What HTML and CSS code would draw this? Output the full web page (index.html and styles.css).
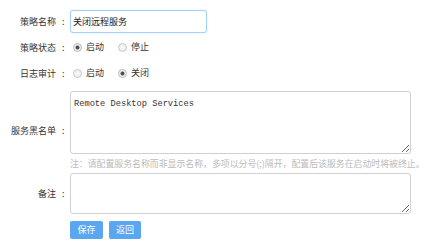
FILE: index.html
```html
<!DOCTYPE html>
<html>

<head>
  <meta charset="utf-8">
  <title>策略编辑</title>
  <link rel="stylesheet" href="styles.css">
</head>

<body>
  <form class="policy">
    <div class="row row-name">
      <label class="lbl">策略名称<span class="colon">:</span></label>
      <div class="field">
        <input type="text" class="txt focus" value="关闭远程服务" autofocus>
      </div>
    </div>
    <div class="row row-radio">
      <label class="lbl">策略状态<span class="colon">:</span></label>
      <div class="field">
        <label class="opt"><input type="radio" name="state" checked>启动</label>
        <label class="opt"><input type="radio" name="state">停止</label>
      </div>
    </div>
    <div class="row row-radio row-audit">
      <label class="lbl">日志审计<span class="colon">:</span></label>
      <div class="field">
        <label class="opt"><input type="radio" name="audit">启动</label>
        <label class="opt"><input type="radio" name="audit" checked>关闭</label>
      </div>
    </div>
    <div class="row row-black">
      <label class="lbl">服务黑名单<span class="colon">:</span></label>
      <div class="field">
        <textarea class="area area-black">Remote Desktop Services</textarea>
        <p class="note">注：请配置服务名称而非显示名称，多项以分号(;)隔开，配置后该服务在启动时将被终止。</p>
      </div>
    </div>
    <div class="row row-memo">
      <label class="lbl">备注<span class="colon">:</span></label>
      <div class="field">
        <textarea class="area area-memo"></textarea>
      </div>
    </div>
    <div class="row row-btns">
      <span class="lbl"></span>
      <div class="field">
        <button type="button" class="btn">保存</button>
        <button type="button" class="btn">返回</button>
      </div>
    </div>
  </form>
</body>

</html>
```

FILE: styles.css
```css
* {
  box-sizing: border-box;
}

body {
  margin: 0;
  background: #fff;
  color: #333;
  font-family: "Microsoft YaHei", "Noto Sans CJK SC", "Noto Sans", sans-serif;
  font-size: 9px;
}

.policy {
  padding-top: 10px;
}

.row {
  display: flex;
  align-items: center;
}

.lbl {
  width: 70px;
  flex: none;
  text-align: right;
  line-height: 12px;
  color: #333;
}

.colon {
  display: inline-block;
  width: 14px;
  padding-left: 6px;
  text-align: left;
}

.field {
  flex: 1;
}

.row-name {
  height: 23px;
}

.txt {
  width: 137px;
  height: 23px;
  padding: 0 2px;
  border: 1px solid #a6d0fb;
  border-radius: 3px;
  font: inherit;
  font-size: 9px;
  color: #222;
  caret-color: #222;
  outline: none;
}

.txt.focus {
  box-shadow: 0 0 2px #cfe6ff;
}

.row-radio {
  height: 20px;
  margin-top: 5px;
}

.row-audit {
  margin-top: 6px;
}

.opt {
  display: inline-flex;
  align-items: center;
  margin-right: 9px;
  line-height: 12px;
}

.opt input {
  appearance: none;
  -webkit-appearance: none;
  width: 9px;
  height: 9px;
  margin: 0 4px 0 3px;
  border: 1px solid #c9c9c9;
  border-radius: 50%;
  background: radial-gradient(circle, #fafafa 0, #e6e6e6 100%);
}

.opt input:checked {
  border-color: #b9b9b9;
  background: radial-gradient(circle, #444 0, #555 1.6px, #eee 2.4px, #f6f6f6 100%);
}

.row-black {
  margin-top: 7px;
}

.area {
  display: block;
  width: 341px;
  padding: 7px 3px 5px;
  border: 1px solid #d0d0d0;
  border-radius: 3px;
  font-family: "Liberation Mono", "DejaVu Sans Mono", monospace;
  font-size: 8.7px;
  color: #333;
  resize: vertical;
  outline: none;
}

.area-black {
  height: 63px;
}

.note {
  margin: 3px 0 0;
  line-height: 13px;
  font-size: 8.9px;
  color: #bbb;
  white-space: nowrap;
}

.row-memo {
  margin-top: 3px;
}

.area-memo {
  height: 41px;
}

.row-btns {
  margin-top: 7px;
}

.btn {
  width: 33px;
  height: 18px;
  margin: 0 1px 0 0;
  padding: 0;
  border: 0;
  border-radius: 2px;
  background: #5aa6f0;
  color: #fff;
  font: inherit;
  font-size: 9px;
  line-height: 18px;
}

.btn + .btn {
  margin-left: 3px;
  width: 32px;
}
```
